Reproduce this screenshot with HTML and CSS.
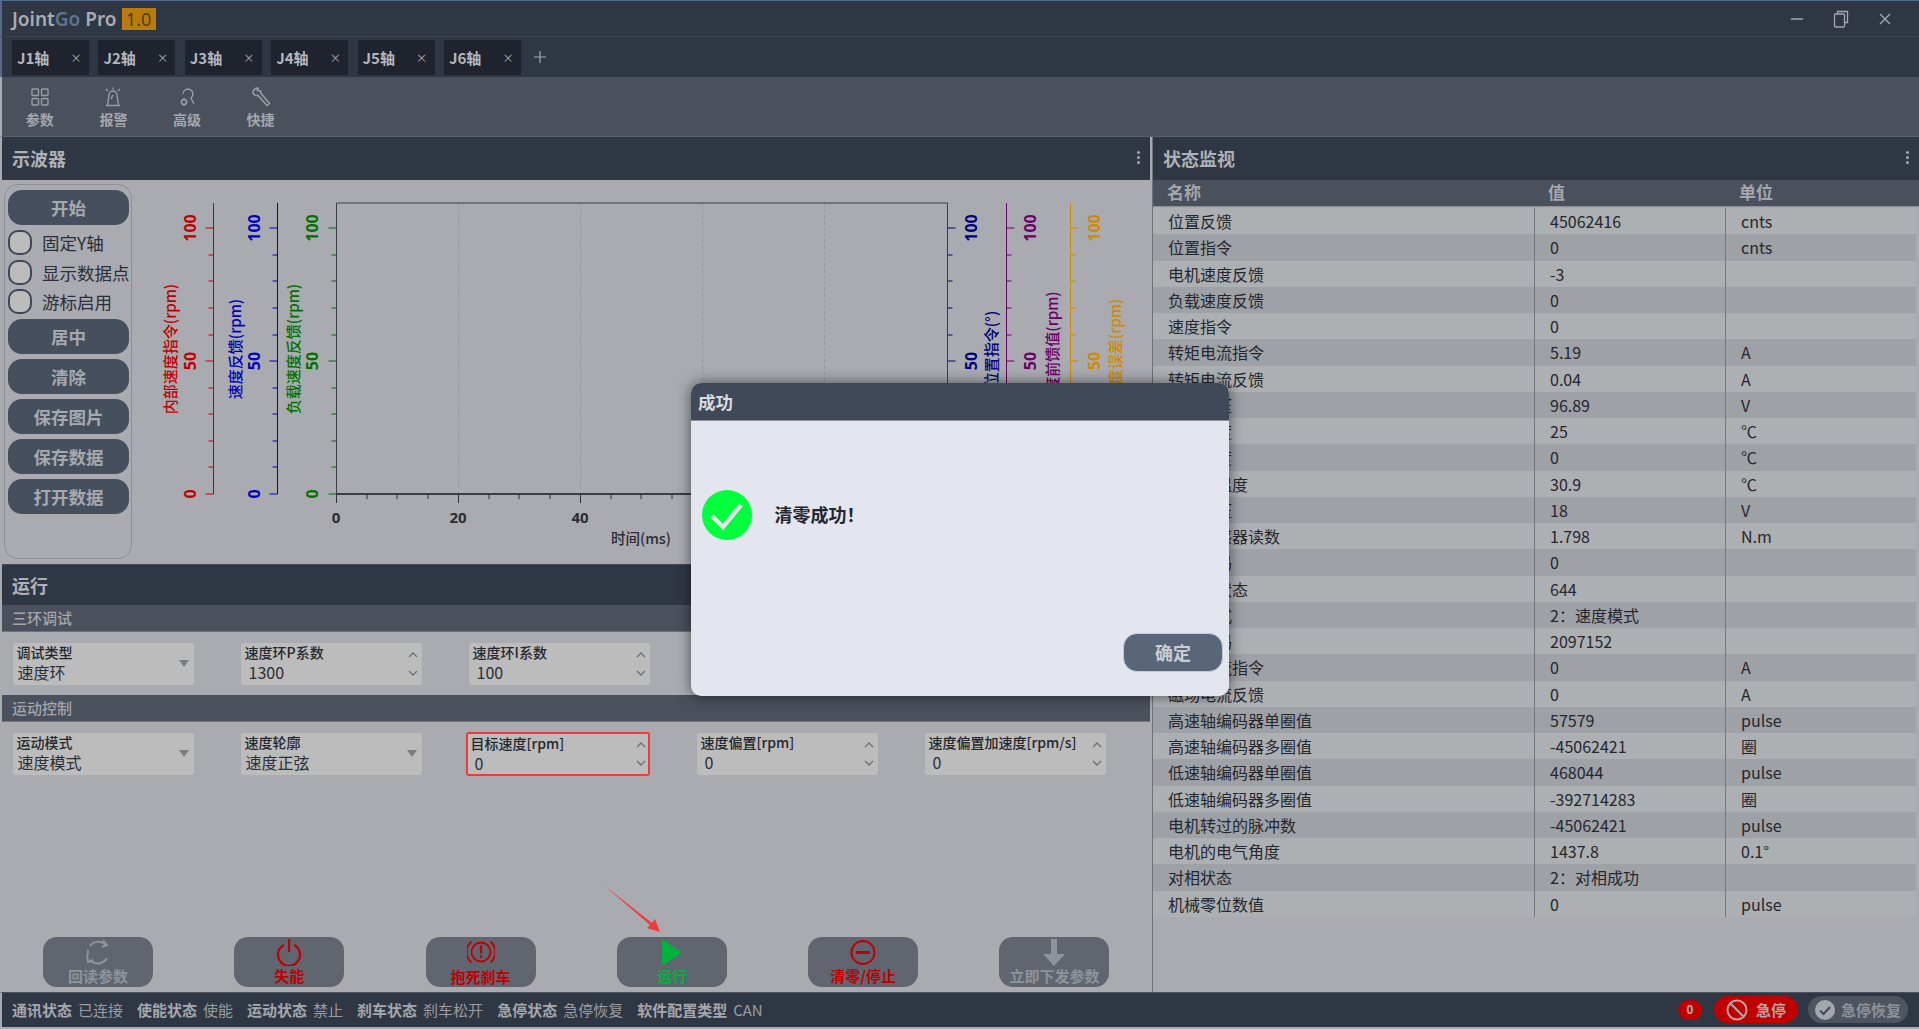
FILE: index.html
```html
<!DOCTYPE html>
<html lang="zh-CN">
<head>
  <meta charset="UTF-8">
  <title>JointGo Pro</title>
  <link rel="stylesheet" href="styles.css">
</head>
<body>
<div class="app">
  <div class="titlebar">
    <div class="logo">Joint<span class="logo-go">Go</span> Pro</div>
    <div class="version">1.0</div>
    <div class="win-btns">
      <svg width="14" height="14" viewBox="0 0 14 14"><path d="M1 7h12" stroke="#a4a7ad" stroke-width="1.5"/></svg>
      <svg width="16" height="18" viewBox="0 0 16 18" fill="none" stroke="#a4a7ad" stroke-width="1.3"><rect x="1.5" y="4" width="10" height="13" rx="1"/><path d="M4.5 4V1.5h10v11h-3"/></svg>
      <svg width="14" height="14" viewBox="0 0 14 14"><path d="M2 2l10 10M12 2L2 12" stroke="#a4a7ad" stroke-width="1.4"/></svg>
    </div>
  </div>

  <div class="tabbar">
    <div class="tab">J1轴<span class="tab-x">×</span></div>
    <div class="tab">J2轴<span class="tab-x">×</span></div>
    <div class="tab">J3轴<span class="tab-x">×</span></div>
    <div class="tab">J4轴<span class="tab-x">×</span></div>
    <div class="tab">J5轴<span class="tab-x">×</span></div>
    <div class="tab">J6轴<span class="tab-x">×</span></div>
    <svg class="tab-plus" width="14" height="14" viewBox="0 0 14 14"><path d="M7 1v12M1 7h12" stroke="#a4a7ad" stroke-width="1.2"/></svg>
  </div>

  <div class="toolbar">
    <div class="tool">
      <svg width="20" height="20" viewBox="0 0 20 20" fill="none" stroke="#9a9da4" stroke-width="1.4"><rect x="2" y="2" width="6.5" height="6.5" rx="1"/><rect x="11.5" y="2" width="6.5" height="6.5" rx="1"/><rect x="2" y="11.5" width="6.5" height="6.5" rx="1"/><rect x="11.5" y="11.5" width="6.5" height="6.5" rx="1"/></svg>
      <span>参数</span>
    </div>
    <div class="tool">
      <svg width="20" height="20" viewBox="0 0 20 20" fill="none" stroke="#9a9da4" stroke-width="1.4"><path d="M3 18.5h14M4.500 18L6 8a4 4 0 0 1 8 0l1.500 10"/><path d="M10 0.500v2M3 2l2 2M17 2l-2 2M10 8l-2 4"/></svg>
      <span>报警</span>
    </div>
    <div class="tool">
      <svg width="20" height="20" viewBox="0 0 20 20" fill="none" stroke="#9a9da4" stroke-width="1.4"><path d="M6 7a5 5 0 1 1 8 4l3 6"/><circle cx="7" cy="15" r="2.500"/><path d="M7 11v1M7 18v1M3.500 15h1M9.500 15h1"/></svg>
      <span>高级</span>
    </div>
    <div class="tool">
      <svg width="20" height="20" viewBox="0 0 20 20" fill="none" stroke="#9a9da4" stroke-width="1.6"><path d="M8 1.500a4.500 4.500 0 0 0-6 5l2.500 2 2.500 0 9 10 2.500-2-8.500-10-.5-2.500-3-.5-1-2z"/></svg>
      <span>快捷</span>
    </div>
  </div>

  <div class="main">
    <div class="left">
      <div class="panel-head">
        <span>示波器</span>
        <div class="dots"><i></i><i></i><i></i></div>
      </div>
      <div class="scope">
        <div class="scope-side">
          <button class="scope-btn">开始</button>
          <label class="check-row"><span class="check"></span>固定Y轴</label>
          <label class="check-row"><span class="check"></span>显示数据点</label>
          <label class="check-row"><span class="check"></span>游标启用</label>
          <button class="scope-btn">居中</button>
          <button class="scope-btn">清除</button>
          <button class="scope-btn">保存图片</button>
          <button class="scope-btn">保存数据</button>
          <button class="scope-btn">打开数据</button>
        </div>
        <!-- viewBox uses page coordinates so the numbers can be read off the screenshot -->
        <svg class="plot" width="1016" height="384" viewBox="134 180 1016 384">
          <defs>
            <path id="ticks" d="M0 228h-8M0 255h-5M0 281h-5M0 308h-5M0 335h-5M0 361h-8M0 388h-5M0 414h-5M0 441h-5M0 467h-5M0 494h-8" fill="none" stroke="currentColor"/>
          </defs>

          <path class="grid" d="M458.500 203V494M580.500 203V494M702.500 203V494M824.500 203V494"/>
          <path class="frame" d="M336.500 494V203H947.500V494"/>
          <path class="x-axis" d="M336.500 494H947.500"/>
          <path class="x-ticks" d="M336.500 494v9M367 494v5M397 494v5M428 494v5M458.500 494v9M489 494v5M519 494v5M550 494v5M580.500 494v9M611 494v5M641 494v5M672 494v5M702.500 494v9"/>
          <text class="x-label" x="336" y="523">0</text>
          <text class="x-label" x="458" y="523">20</text>
          <text class="x-label" x="580" y="523">40</text>
          <text class="x-name" x="611" y="544">时间(ms)</text>

          <g class="ax-red">
            <path d="M213.500 203V494"/>
            <use href="#ticks" x="213.500"/>
            <text transform="translate(190,228) rotate(-90)">100</text>
            <text transform="translate(190,361) rotate(-90)">50</text>
            <text transform="translate(190,494) rotate(-90)">0</text>
            <text class="ax-name" transform="translate(169,349) rotate(-90)">内部速度指令(rpm)</text>
          </g>
          <g class="ax-blue">
            <path d="M277.500 203V494"/>
            <use href="#ticks" x="277.500"/>
            <text transform="translate(254,228) rotate(-90)">100</text>
            <text transform="translate(254,361) rotate(-90)">50</text>
            <text transform="translate(254,494) rotate(-90)">0</text>
            <text class="ax-name" transform="translate(234,349) rotate(-90)">速度反馈(rpm)</text>
          </g>
          <g class="ax-green">
            <use href="#ticks" x="336.500"/>
            <text transform="translate(312,228) rotate(-90)">100</text>
            <text transform="translate(312,361) rotate(-90)">50</text>
            <text transform="translate(312,494) rotate(-90)">0</text>
            <text class="ax-name" transform="translate(292,349) rotate(-90)">负载速度反馈(rpm)</text>
          </g>
          <g class="ax-navy">
            <use href="#ticks" transform="translate(947.500,0) scale(-1,1)"/>
            <text transform="translate(971,228) rotate(-90)">100</text>
            <text transform="translate(971,361) rotate(-90)">50</text>
            <text class="ax-name" transform="translate(990,349) rotate(-90)">位置指令(°)</text>
          </g>
          <g class="ax-purple">
            <path d="M1006.500 203V494"/>
            <use href="#ticks" transform="translate(1006.500,0) scale(-1,1)"/>
            <text transform="translate(1030,228) rotate(-90)">100</text>
            <text transform="translate(1030,361) rotate(-90)">50</text>
            <text class="ax-name" transform="translate(1051,349) rotate(-90)">速度前馈值(rpm)</text>
          </g>
          <g class="ax-orange">
            <path d="M1070.500 203V494"/>
            <use href="#ticks" transform="translate(1070.500,0) scale(-1,1)"/>
            <text transform="translate(1094,228) rotate(-90)">100</text>
            <text transform="translate(1094,361) rotate(-90)">50</text>
            <text class="ax-name" transform="translate(1114,349) rotate(-90)">速度误差(rpm)</text>
          </g>
        </svg>
      </div>

      <div class="panel-head run-head"><span>运行</span></div>
      <div class="run">
        <div class="sub-head">三环调试</div>
        <div class="form-row">
          <div class="field">
            <div class="field-label">调试类型</div>
            <div class="field-value select-value">速度环</div>
            <i class="caret"></i>
          </div>
          <div class="field">
            <div class="field-label">速度环P系数</div>
            <div class="field-value">1300</div>
            <svg class="spin" width="10" height="26" viewBox="0 0 10 26"><path d="M1 6l4-4 4 4M1 20l4 4 4-4"/></svg>
          </div>
          <div class="field">
            <div class="field-label">速度环I系数</div>
            <div class="field-value">100</div>
            <svg class="spin" width="10" height="26" viewBox="0 0 10 26"><path d="M1 6l4-4 4 4M1 20l4 4 4-4"/></svg>
          </div>
        </div>
        <div class="sub-head">运动控制</div>
        <div class="form-row">
          <div class="field">
            <div class="field-label">运动模式</div>
            <div class="field-value select-value">速度模式</div>
            <i class="caret"></i>
          </div>
          <div class="field">
            <div class="field-label">速度轮廓</div>
            <div class="field-value select-value">速度正弦</div>
            <i class="caret"></i>
          </div>
          <div class="field field-hot">
            <div class="field-label">目标速度[rpm]</div>
            <div class="field-value">0</div>
            <svg class="spin" width="10" height="26" viewBox="0 0 10 26"><path d="M1 6l4-4 4 4M1 20l4 4 4-4"/></svg>
          </div>
          <div class="field">
            <div class="field-label">速度偏置[rpm]</div>
            <div class="field-value">0</div>
            <svg class="spin" width="10" height="26" viewBox="0 0 10 26"><path d="M1 6l4-4 4 4M1 20l4 4 4-4"/></svg>
          </div>
          <div class="field">
            <div class="field-label">速度偏置加速度[rpm/s]</div>
            <div class="field-value">0</div>
            <svg class="spin" width="10" height="26" viewBox="0 0 10 26"><path d="M1 6l4-4 4 4M1 20l4 4 4-4"/></svg>
          </div>
        </div>
        <div class="actions">
          <div class="action">
            <svg width="26" height="27" viewBox="0 0 26 27" fill="none" stroke="#8f939a" stroke-width="2"><path d="M5 7a10.500 10.500 0 0 1 16-1M22 19a10.500 10.500 0 0 1-17 2M3 11a10.500 10.500 0 0 0 0 5"/><path d="M18 1l4 5-5 2" /><path d="M2 16l1 7 5-2"/></svg>
            <span>回读参数</span>
          </div>
          <div class="action action-red">
            <svg width="26" height="27" viewBox="0 0 26 27" fill="none" stroke="#c00000" stroke-width="2.200"><path d="M8 6a11 11 0 1 0 10 0M13 0v13"/></svg>
            <span>失能</span>
          </div>
          <div class="action action-red action-low">
            <svg width="28" height="26" viewBox="0 0 28 26" fill="none" stroke="#c00000" stroke-width="1.800"><circle cx="14" cy="13" r="9.500"/><path d="M4.500 2.500a14 14 0 0 0 0 21M23.500 2.500a14 14 0 0 1 0 21"/><path d="M14 6.500v8M14 16.500v2.500" stroke-width="2.200"/></svg>
            <span>抱死刹车</span>
          </div>
          <div class="action action-green">
            <svg width="22" height="27" viewBox="0 0 22 27"><path d="M1 0l20 13.500L1 27z" fill="#00b33c"/></svg>
            <span>运行</span>
          </div>
          <div class="action action-red">
            <svg width="26" height="27" viewBox="0 0 26 27" fill="none" stroke="#c00000" stroke-width="2"><circle cx="13" cy="13.500" r="11.500"/><path d="M6 13.500h14" stroke-width="3"/></svg>
            <span>清零/停止</span>
          </div>
          <div class="action">
            <svg width="24" height="27" viewBox="0 0 24 27"><path d="M9 0h6v15h8L12 27 1 15h8z" fill="#8f939a"/></svg>
            <span>立即下发参数</span>
          </div>
        </div>
      </div>
    </div>

    <div class="right">
      <div class="panel-head">
        <span>状态监视</span>
        <div class="dots"><i></i><i></i><i></i></div>
      </div>
      <div class="mon-head"><span>名称</span><span>值</span><span>单位</span></div>
      <div class="mon-body">
        <div class="mon-row"><span>位置反馈</span><span>45062416</span><span>cnts</span></div>
        <div class="mon-row"><span>位置指令</span><span>0</span><span>cnts</span></div>
        <div class="mon-row"><span>电机速度反馈</span><span>-3</span><span></span></div>
        <div class="mon-row"><span>负载速度反馈</span><span>0</span><span></span></div>
        <div class="mon-row"><span>速度指令</span><span>0</span><span></span></div>
        <div class="mon-row"><span>转矩电流指令</span><span>5.19</span><span>A</span></div>
        <div class="mon-row"><span>转矩电流反馈</span><span>0.04</span><span>A</span></div>
        <div class="mon-row"><span>母线电压</span><span>96.89</span><span>V</span></div>
        <div class="mon-row"><span>模块温度</span><span>25</span><span>℃</span></div>
        <div class="mon-row"><span>电机温度</span><span>0</span><span>℃</span></div>
        <div class="mon-row"><span>驱动板温度</span><span>30.9</span><span>℃</span></div>
        <div class="mon-row"><span>控制电压</span><span>18</span><span>V</span></div>
        <div class="mon-row"><span>力矩传感器读数</span><span>1.798</span><span>N.m</span></div>
        <div class="mon-row"><span>故障代码</span><span>0</span><span></span></div>
        <div class="mon-row"><span>驱动器状态</span><span>644</span><span></span></div>
        <div class="mon-row"><span>运行模式</span><span>2：速度模式</span><span></span></div>
        <div class="mon-row"><span>电机编码</span><span>2097152</span><span></span></div>
        <div class="mon-row"><span>磁场电流指令</span><span>0</span><span>A</span></div>
        <div class="mon-row"><span>磁场电流反馈</span><span>0</span><span>A</span></div>
        <div class="mon-row"><span>高速轴编码器单圈值</span><span>57579</span><span>pulse</span></div>
        <div class="mon-row"><span>高速轴编码器多圈值</span><span>-45062421</span><span>圈</span></div>
        <div class="mon-row"><span>低速轴编码器单圈值</span><span>468044</span><span>pulse</span></div>
        <div class="mon-row"><span>低速轴编码器多圈值</span><span>-392714283</span><span>圈</span></div>
        <div class="mon-row"><span>电机转过的脉冲数</span><span>-45062421</span><span>pulse</span></div>
        <div class="mon-row"><span>电机的电气角度</span><span>1437.8</span><span>0.1°</span></div>
        <div class="mon-row"><span>对相状态</span><span>2：对相成功</span><span></span></div>
        <div class="mon-row"><span>机械零位数值</span><span>0</span><span>pulse</span></div>
      </div>
    </div>
  </div>

  <div class="statusbar">
    <div class="stat"><b>通讯状态</b>已连接</div>
    <div class="stat"><b>使能状态</b>使能</div>
    <div class="stat"><b>运动状态</b>禁止</div>
    <div class="stat"><b>刹车状态</b>刹车松开</div>
    <div class="stat"><b>急停状态</b>急停恢复</div>
    <div class="stat"><b>软件配置类型</b>CAN</div>
    <div class="stat-right">
      <div class="count-badge">0</div>
      <div class="estop">
        <svg width="22" height="22" viewBox="0 0 22 22" fill="none" stroke="#b3a6a6" stroke-width="2"><circle cx="11" cy="11" r="9.500"/><path d="M4.500 4.500l13 13"/></svg>
        急停
      </div>
      <div class="estop estop-off">
        <svg width="20" height="20" viewBox="0 0 20 20"><circle cx="10" cy="10" r="10" fill="#a4a7ad"/><path d="M5 10.500l3.500 3.500L15 7" fill="none" stroke="#444a55" stroke-width="2"/></svg>
        急停恢复
      </div>
    </div>
  </div>

  <!-- red annotation arrow drawn on top of the screenshot -->
  <svg class="arrow" width="56" height="47" viewBox="0 0 56 47"><path d="M0 0L47 37l3-4 5 13-13-4 3-3z" fill="#ef3b3b"/></svg>

  <div class="dialog">
    <div class="dialog-head">成功</div>
    <div class="dialog-body">
      <div class="dialog-msg">
        <svg width="50" height="50" viewBox="0 0 50 50"><circle cx="25" cy="25" r="25" fill="#00ff3c"/><path d="M10 26l11 11L39 15" fill="none" stroke="#dfe8e4" stroke-width="4.500"/></svg>
        <span class="dialog-text">清零成功！</span>
      </div>
      <button class="dialog-ok">确定</button>
    </div>
  </div>
</div>
</body>
</html>
```

FILE: styles.css
```css
* {
  box-sizing: border-box;
}
html, body {
  margin: 0;
  padding: 0;
  overflow: hidden;
}
body {
  width: 1919px;
  height: 1029px;
  background-color: #a9abb0;
  font-family: "Noto Sans CJK SC", "Noto Sans", sans-serif;
  font-size: 16px;
  color: #24272d;
}
.app {
  position: relative;
  width: 1919px;
  height: 1029px;
  display: flex;
  flex-direction: column;
  border-bottom: 2px solid #a9abb0;
}

/* title bar */
.titlebar {
  height: 37px;
  flex: none;
  display: flex;
  align-items: center;
  padding-left: 10px;
  background-color: #303744;
  border-top: 1px solid #566a8c;
  border-left: 2px solid #566a8c;
  border-bottom: 1px solid #3a4150;
}
.logo {
  font-family: "Noto Sans", sans-serif;
  font-size: 19px;
  font-weight: 600;
  color: #a9acb2;
}
.logo-go {
  color: #5d7690;
}
.version {
  margin-left: 5px;
  width: 34px;
  height: 22px;
  line-height: 22px;
  text-align: center;
  font-family: "Noto Sans", sans-serif;
  font-size: 18px;
  background-color: #b97c0c;
  color: #4f3f1c;
}
.win-btns {
  margin-left: auto;
  margin-right: 27px;
  display: flex;
  align-items: center;
  gap: 29px;
}

/* tabs */
.tabbar {
  height: 40px;
  flex: none;
  display: flex;
  align-items: center;
  gap: 9.4px;
  padding-left: 10px;
  background-color: #303744;
  border-left: 2px solid #566a8c;
}
.tab {
  width: 77px;
  height: 35px;
  display: flex;
  align-items: center;
  justify-content: space-between;
  padding: 0 8px 0 5px;
  background-color: #1f232d;
  color: #b3b6bc;
  font-size: 15px;
  font-weight: 700;
}
.tab-x {
  font-family: "Noto Sans", sans-serif;
  font-size: 17px;
  font-weight: 300;
  color: #a4a7ad;
}
.tab-plus {
  margin-left: 3px;
}

/* toolbar */
.toolbar {
  height: 60px;
  flex: none;
  display: flex;
  padding-left: 1px;
  background-color: #4a505c;
  border-left: 2px solid #a9abb0;
  border-bottom: 1px solid #5a606b;
}
.tool {
  width: 73.6px;
  display: flex;
  flex-direction: column;
  align-items: center;
  padding-top: 10px;
  color: #a4a7ad;
  font-size: 14px;
  font-weight: 700;
  line-height: 20px;
}
.tool span {
  margin-top: 2px;
}

/* main area */
.main {
  flex: 1;
  min-height: 0;
  display: flex;
  border-left: 2px solid #a9abb0;
}
.left {
  width: 1148px;
  flex: none;
  display: flex;
  flex-direction: column;
}
.right {
  width: 767px;
  flex: none;
  margin-left: 2px;
  border-left: 1px solid #6d727b;
  display: flex;
  flex-direction: column;
}
.panel-head {
  height: 43px;
  flex: none;
  display: flex;
  align-items: center;
  justify-content: space-between;
  padding: 0 10px 2px;
  background-color: #303744;
  color: #aeb1b6;
  font-size: 18px;
  font-weight: 700;
}
.dots {
  display: flex;
  flex-direction: column;
  gap: 2px;
}
.dots i {
  width: 3px;
  height: 3px;
  border-radius: 50%;
  background-color: #a4a7ad;
}

/* oscilloscope */
.scope {
  height: 384px;
  flex: none;
  display: flex;
}
.scope-side {
  width: 128px;
  height: 375px;
  margin: 4px 0 0 2px;
  padding: 5px 2px 0 3px;
  display: flex;
  flex-direction: column;
  gap: 5px;
  border: 1px solid #8d9097;
  border-radius: 14px;
}
.scope-btn {
  height: 35px;
  flex: none;
  padding: 0 0 1px;
  border: none;
  border-radius: 14px;
  background-color: #454f5e;
  color: #a6a9ae;
  font-family: inherit;
  font-size: 17.500px;
  font-weight: 700;
}
.check-row {
  height: 24.7px;
  flex: none;
  display: flex;
  align-items: center;
  font-size: 17.500px;
  white-space: nowrap;
  color: #2b2f37;
}
.check {
  width: 24px;
  height: 25px;
  flex: none;
  margin-right: 10px;
  border: 2px solid #3f4754;
  border-radius: 10px;
  background-color: #bcbcbc;
}
.plot {
  flex: none;
  margin-left: 2px;
}
.plot path {
  fill: none;
}
.grid {
  stroke: #999ba1;
  stroke-dasharray: 4 2;
}
.frame {
  stroke: #3b3e44;
}
.x-axis {
  stroke: #3b3e44;
  stroke-width: 2;
}
.x-ticks {
  stroke: #2e3036;
}
.x-label {
  font-family: "Open Sans", sans-serif;
  font-size: 15px;
  font-weight: 700;
  fill: #2a2d33;
  text-anchor: middle;
}
.x-name {
  font-size: 14.500px;
  font-weight: 500;
  fill: #2a2d33;
}
.plot g text {
  font-family: "Open Sans", sans-serif;
  font-size: 16px;
  font-weight: 700;
  text-anchor: middle;
  dominant-baseline: central;
}
.plot g .ax-name {
  font-family: "Noto Sans CJK SC", sans-serif;
  font-size: 15px;
  font-weight: 500;
}
.ax-red { color: #c00000; }
.ax-red path { stroke: #c00000; }
.ax-red text { fill: #c00000; }
.ax-blue { color: #0000c0; }
.ax-blue path { stroke: #0000c0; }
.ax-blue text { fill: #0000c0; }
.ax-green { color: #007000; }
.ax-green text { fill: #007000; }
.ax-navy { color: #00007a; }
.ax-navy text { fill: #00007a; }
.ax-purple { color: #6a006a; }
.ax-purple path { stroke: #6a006a; }
.ax-purple text { fill: #6a006a; }
.ax-orange { color: #d08a00; }
.ax-orange path { stroke: #d08a00; }
.ax-orange text { fill: #d08a00; }

/* run section */
.run-head {
  height: 41px;
  padding-bottom: 0;
  border-top: 1px solid #454b57;
}
.run {
  flex: 1;
  min-height: 0;
  display: flex;
  flex-direction: column;
}
.sub-head {
  height: 27px;
  flex: none;
  padding-left: 10px;
  line-height: 26px;
  background-color: #4a505c;
  border-bottom: 1px solid #6d727b;
  color: #a4a7ad;
  font-size: 15px;
  font-weight: 500;
}
.form-row {
  flex: none;
  display: flex;
  gap: 47px;
  padding: 11px 0 10px 10.6px;
}
.field {
  position: relative;
  width: 181px;
  height: 42px;
  flex: none;
  padding: 0 4px;
  border-radius: 3px;
  background-color: #bcbcbc;
}
.field-hot {
  width: 184px;
  height: 44px;
  margin: -1px 0 -1px -3px;
  border: 2px solid #ef3b3b;
  padding: 0 4px 0 3px;
}
.field-label {
  font-size: 14px;
  font-weight: 500;
  line-height: 19px;
  white-space: nowrap;
  color: #24272d;
}
.field-value {
  font-size: 16px;
  line-height: 21px;
  padding-left: 4px;
  color: #2b2f37;
}
.select-value {
  padding-left: 1px;
}
.caret {
  position: absolute;
  right: 5px;
  top: 17px;
  width: 0;
  height: 0;
  border-left: 5px solid transparent;
  border-right: 5px solid transparent;
  border-top: 7px solid #7a7d82;
}
.spin {
  position: absolute;
  right: 4px;
  top: 8px;
  fill: none;
  stroke: #6e7177;
  stroke-width: 1.4;
}
.field-hot .spin {
  right: 2px;
  top: 7px;
}
.actions {
  margin-top: auto;
  margin-bottom: 5px;
  padding-left: 41px;
  display: flex;
  gap: 81.3px;
}
.action {
  width: 110px;
  height: 50px;
  flex: none;
  display: flex;
  flex-direction: column;
  align-items: center;
  padding-top: 2px;
  border-radius: 14px;
  background-color: #606570;
  color: #8f939a;
  font-size: 15px;
  font-weight: 700;
  line-height: 19px;
  white-space: nowrap;
}
.action-red {
  color: #c00000;
}
.action-green {
  color: #00b33c;
}
.action-low span {
  margin-top: 2px;
}

/* status monitor */
.mon-head, .mon-row {
  display: grid;
  grid-template-columns: 381px 191px 1fr;
}
.mon-head {
  height: 27px;
  flex: none;
  line-height: 23px;
  background-color: #4a505c;
  color: #a4a7ad;
  font-size: 17px;
  font-weight: 700;
  border-bottom: 1px solid #8d9097;
}
.mon-head span {
  padding-left: 14px;
}
.mon-body {
  padding-top: 1px;
}
.mon-row {
  height: 26.26px;
  line-height: 26px;
  margin-right: 3px;
  background-color: #adb0b3;
  color: #24272d;
}
.mon-row:nth-child(even) {
  background-color: #9ea1a6;
}
.mon-row span {
  padding-left: 15px;
  white-space: nowrap;
}
.mon-row span + span {
  border-left: 1px solid #73767c;
}

/* status bar */
.statusbar {
  height: 35px;
  flex: none;
  display: flex;
  align-items: center;
  gap: 14px;
  padding: 0 0 1px 10px;
  background-color: #303744;
  border-top: 1px solid #4a505c;
  border-left: 2px solid #a9abb0;
  color: #9a9da3;
  font-size: 15px;
}
.stat b {
  margin-right: 6px;
  color: #a4a7ad;
}
.stat-right {
  margin-left: auto;
  margin-right: 11px;
  display: flex;
  align-items: center;
}
.count-badge {
  width: 24px;
  height: 20px;
  line-height: 20px;
  text-align: center;
  border-radius: 10px;
  background-color: #c00000;
  color: #b3a6a6;
  font-family: "Noto Sans", sans-serif;
  font-size: 12px;
  font-weight: 700;
}
.estop {
  height: 27px;
  width: 84px;
  margin-left: 12px;
  display: flex;
  align-items: center;
  justify-content: center;
  gap: 8px;
  border-radius: 14px;
  background-color: #c00000;
  color: #b3a6a6;
  font-weight: 700;
}
.estop-off {
  width: 100px;
  margin-left: 10px;
  gap: 6px;
  background-color: #4f5560;
  color: #8e9299;
}

/* overlays */
.arrow {
  position: absolute;
  left: 605px;
  top: 886px;
}
.dialog {
  position: absolute;
  left: 691px;
  top: 383px;
  width: 538px;
  height: 313px;
  border-radius: 10px;
  overflow: hidden;
  display: flex;
  flex-direction: column;
  background-color: #e3e6ee;
  box-shadow: 0 0 14px rgba(0, 0, 0, 0.55);
}
.dialog-head {
  height: 38px;
  flex: none;
  padding-left: 7px;
  line-height: 37px;
  background-color: #404959;
  border-bottom: 1px solid #8d9097;
  color: #d7dae0;
  font-size: 17.500px;
  font-weight: 700;
}
.dialog-body {
  flex: 1;
  display: flex;
  flex-direction: column;
  padding: 69px 6px 24px 10.600px;
}
.dialog-msg {
  display: flex;
  align-items: center;
  gap: 23px;
  font-size: 18px;
  font-weight: 700;
  color: #24272d;
}
.dialog-text {
  margin-top: -2px;
}
.dialog-ok {
  width: 100px;
  height: 39px;
  margin-top: auto;
  align-self: flex-end;
  padding: 0 0 1px;
  border: 1px solid #c6cad3;
  border-radius: 14px;
  background-color: #596679;
  color: #c9cdd3;
  font-family: inherit;
  font-size: 18px;
  font-weight: 700;
}
```
